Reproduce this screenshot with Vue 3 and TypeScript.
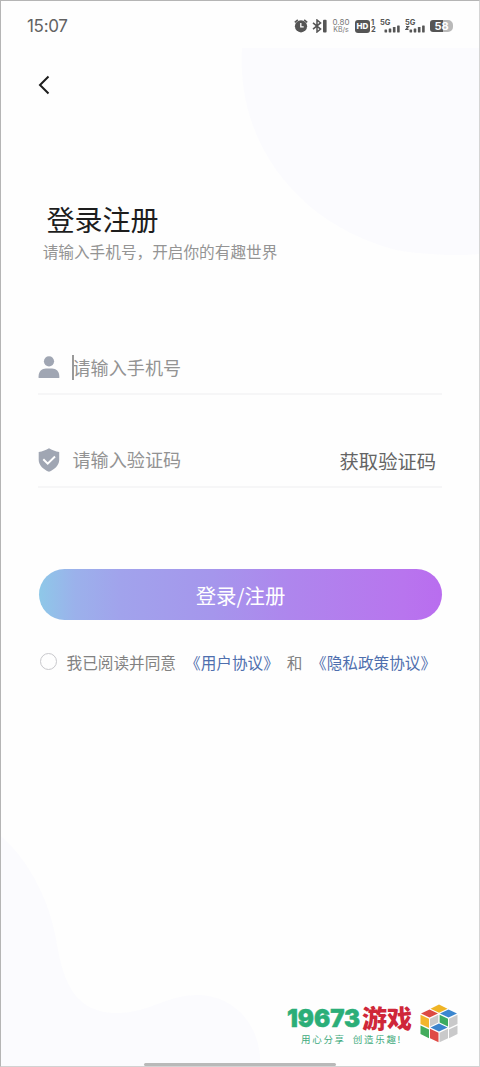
<script setup lang="ts">
import { ref } from 'vue'

interface Face {
  points: string
  color: string
}

const time = '15:07'
const agreed = ref(false)
const bars = [3, 4, 5.5, 7]

const cubeFaces: Face[] = [
  { points: '19,0.5 27.5,4.8 19,8.8 10.5,4.8', color: '#efb425' },
  { points: '9.5,5.5 18,9.6 9.5,13.6 1,9.6', color: '#dc4a43' },
  { points: '28.5,5.5 37,9.6 28.5,13.6 20,9.6', color: '#3b86cf' },
  { points: '0.5,10.8 9,14.8 9,24 0.5,20', color: '#f3b62c' },
  { points: '10,14.8 18.3,10.8 18.3,18.6 10,22.5', color: '#c9c9ca' },
  { points: '19.6,10.8 28,14.8 28,22.5 19.6,18.6', color: '#3cab61' },
  { points: '29,14.8 37.5,10.8 37.5,20 29,24', color: '#c9c9ca' },
  { points: '19,19.6 27.5,23.4 19,27.4 10.5,23.4', color: '#3b83cc' },
  { points: '0.5,21.4 9,25.4 9,34.2 0.5,30', color: '#43ac5d' },
  { points: '10,24.7 18.5,28.7 18.5,38.3 10,34.3', color: '#df4a45' },
  { points: '19.5,28.7 28,24.7 28,34.3 19.5,38.3', color: '#c9c9ca' },
  { points: '29,25.4 37.5,21.4 37.5,30 29,34.2', color: '#c9c9ca' },
]
</script>

<template>
  <div class="screen">
    <svg class="backdrop" viewBox="0 0 480 1067" aria-hidden="true">
      <path d="M242 48H479V254C460 256 425 255 396 250C303 226 236 148 242 48Z" />
      <path d="M1 836C30 862 49 900 56 939C63 984 76 1013 117 1013C151 1013 164 995 199 995C232 996 257 1021 260 1056V1066H1Z" />
    </svg>

    <header class="status">
      <span class="time">{{ time }}</span>
      <div class="indicators">
        <svg class="alarm" viewBox="0 0 14 14">
          <circle cx="7" cy="7.3" r="6.1" fill="#555" />
          <path d="M0.8 3.3L3.8 0.8M13.2 3.3L10.2 0.8" stroke="#555" stroke-width="1.5" />
          <path d="M6.8 4V7.8H9.7" fill="none" stroke="#fff" stroke-width="1.3" />
        </svg>
        <svg class="bluetooth" viewBox="0 0 15 14">
          <path d="M1 3.8L8.6 10.1L5 13V1L8.6 3.9L1 10.2" fill="none" stroke="#555" stroke-width="1.5" />
          <rect x="11" y="0.8" width="3.6" height="12.6" rx="1" fill="#555" />
        </svg>
        <span class="speed"><span>0.80</span><span>KB/s</span></span>
        <span class="hd">HD</span>
        <span class="sims"><span>1</span><span>2</span></span>
        <svg v-for="n in 2" :key="n" class="signal" viewBox="0 0 21 16">
          <text x="0" y="7.2" class="network">5G</text>
          <path v-if="n === 2" d="M1 8.7H3.5L1 11.3H3.6" fill="none" stroke="#555" stroke-width="1.2" />
          <rect
            v-for="(height, index) in bars"
            :key="index"
            :x="4.5 + index * 4.2"
            :y="14.5 - height"
            width="2.6"
            :height="height"
            rx="0.4"
            fill="#555"
          />
        </svg>
        <span class="battery">58</span>
      </div>
    </header>

    <button class="back" aria-label="返回">
      <svg viewBox="0 0 14 20">
        <path d="M11.5 1.5L3 10L11.5 18.5" />
      </svg>
    </button>

    <main>
      <h1>登录注册</h1>
      <p class="subtitle">请输入手机号，开启你的有趣世界</p>

      <div class="field phone">
        <svg class="field-icon" viewBox="0 0 22 24">
          <circle cx="11" cy="6.3" r="5.1" />
          <path d="M0.6 23V21.2C0.6 16.4 3.8 13.4 8 13.4H14C18.2 13.4 21.3 16.4 21.3 21.2V23Z" />
        </svg>
        <span class="placeholder"><i class="caret"></i>请输入手机号</span>
      </div>

      <div class="field code">
        <svg class="field-icon" viewBox="0 0 22 24">
          <path d="M11 0.2C13.8 2 17.5 3.4 21.2 4V12C21.2 17.3 16.2 21.8 11 23.8C5.8 21.8 0.7 17.3 0.7 12V4C4.5 3.4 8.2 2 11 0.2Z" />
          <path class="check" d="M5.3 11.2L9.7 15.6L17 8.5" />
        </svg>
        <span class="placeholder">请输入验证码</span>
        <span class="send">获取验证码</span>
      </div>

      <button class="submit">登录/注册</button>

      <div class="agreement">
        <span class="radio" @click="agreed = !agreed"></span>
        <span>我已阅读并同意</span>
        <a class="terms">《用户协议》</a>
        <span class="and">和</span>
        <a class="privacy">《隐私政策协议》</a>
      </div>
    </main>

    <footer>
      <div class="brand">
        <div class="brand-name"><span class="digits">19673</span><span class="game">游戏</span></div>
        <div class="slogan"><span>用心分享</span><span>创造乐趣!</span></div>
      </div>
      <svg class="cube" viewBox="0 0 38 39">
        <polygon v-for="face in cubeFaces" :key="face.points" :points="face.points" :fill="face.color" />
      </svg>
    </footer>
    <div class="home-bar"></div>
  </div>
</template>

<style>
html,
body {
  margin: 0;
  background: #fefefe;
}
</style>

<style scoped>
.screen {
  position: relative;
  box-sizing: border-box;
  width: 480px;
  height: 1067px;
  overflow: hidden;
  display: flex;
  flex-direction: column;
  border: 1px solid #b5b5b5;
  border-right-color: #d5d5d5;
  border-bottom-color: #d2d2d2;
  background: #fefefe;
  font-family: "Noto Sans CJK SC", sans-serif;
}
.backdrop {
  position: absolute;
  left: -1px;
  top: -1px;
  width: 480px;
  height: 1067px;
  fill: #fbfbfe;
}
.status,
.back,
main,
footer {
  position: relative;
}
.status {
  display: flex;
  justify-content: space-between;
  align-items: center;
  height: 50px;
  padding: 0 26px 0 26px;
  box-sizing: border-box;
}
.time {
  font: 17px/20px Inter, sans-serif;
  letter-spacing: -0.3px;
  color: #626262;
}
.indicators {
  display: flex;
  align-items: center;
  color: #555;
  font-family: Inter, sans-serif;
}
.alarm {
  width: 14px;
  height: 14px;
}
.bluetooth {
  width: 15px;
  height: 14px;
  margin-left: 4px;
}
.speed {
  display: flex;
  flex-direction: column;
  align-items: center;
  width: 18px;
  margin-left: 5px;
  font-size: 8px;
  line-height: 7px;
  color: #777;
}
.speed span:last-child {
  font-size: 7px;
}
.hd {
  width: 15px;
  height: 13px;
  margin-left: 5px;
  border-radius: 3px;
  background: #555;
  color: #fff;
  font-size: 8px;
  font-weight: 800;
  line-height: 13px;
  text-align: center;
}
.sims {
  display: flex;
  flex-direction: column;
  width: 5px;
  margin-left: 1px;
  font-size: 7.5px;
  font-weight: 700;
  line-height: 7px;
}
.signal {
  width: 21px;
  height: 16px;
  margin-left: 4px;
}
.network {
  font: 700 7.5px Inter, sans-serif;
  fill: #555;
}
.battery {
  width: 23px;
  height: 12px;
  margin-left: 4px;
  border-radius: 3px 5px 5px 3px;
  background: linear-gradient(90deg, #555 57%, #b9b9b9 57%);
  color: #fff;
  font-size: 11px;
  font-weight: 700;
  line-height: 12px;
  text-align: center;
}
.back {
  width: 14px;
  height: 20px;
  margin: 24px 0 0 36px;
  padding: 0;
  border: 0;
  background: none;
}
.back svg {
  display: block;
  width: 14px;
  height: 20px;
}
.back path {
  fill: none;
  stroke: #1d1d1d;
  stroke-width: 2;
}
main {
  display: flex;
  flex-direction: column;
  margin: 104px 37px 0;
}
h1 {
  margin: 0 0 0 8.5px;
  color: #1d1d1d;
  font-size: 28px;
  font-weight: 400;
  line-height: 40px;
}
.subtitle {
  margin: 1px 0 0 4.7px;
  color: #949494;
  font-size: 15.65px;
  line-height: 24px;
}
.field {
  display: flex;
  align-items: center;
  box-sizing: border-box;
  height: 54px;
  border-bottom: 2px solid #f6f6f7;
}
.phone {
  margin-top: 77px;
}
.code {
  margin-top: 39px;
}
.field-icon {
  width: 22px;
  height: 24px;
  margin-bottom: 1px;
  fill: #a0a6b3;
}
.check {
  fill: none;
  stroke: #fff;
  stroke-width: 2;
}
.placeholder {
  position: relative;
  margin: 0 0 1px 12.5px;
  color: #939393;
  font-size: 18.1px;
  line-height: 26px;
}
.code .placeholder {
  margin-bottom: 2px;
}
.caret {
  position: absolute;
  left: -1px;
  top: 1px;
  width: 2px;
  height: 25px;
  background: #999;
}
.send {
  margin: 1px 6px 0 auto;
  color: #646464;
  font-size: 19.3px;
  line-height: 26px;
}
.submit {
  width: 403px;
  height: 51px;
  margin: 81px 0 0 1px;
  padding: 0;
  border: 0;
  border-radius: 26px;
  background: linear-gradient(90deg, #8ec8e8 0%, #9bb1eb 9%, #a1a3ec 20%, #a596ec 43%, #ae86ed 62%, #b875ee 90%, #b96def 100%);
  color: #fff;
  font: 20.4px/52px "Noto Sans CJK SC", sans-serif;
}
.agreement {
  display: flex;
  align-items: center;
  height: 24px;
  margin-top: 31px;
  color: #828282;
  font-size: 15.65px;
  line-height: 24px;
  white-space: nowrap;
}
.radio {
  width: 15px;
  height: 15px;
  margin: 0 9.5px 3px 2px;
  border: 1.5px solid #c8c8cc;
  border-radius: 50%;
}
.terms,
.privacy {
  color: #4f6fae;
}
.terms {
  margin-left: 9px;
}
.and {
  margin-left: 8px;
}
.privacy {
  margin-left: 8.5px;
}
footer {
  display: flex;
  align-items: flex-start;
  margin: auto 21px 20px auto;
}
.brand {
  width: 126px;
  margin-right: 7px;
}
.brand-name {
  display: flex;
  align-items: center;
  height: 29px;
  white-space: nowrap;
}
.digits {
  width: 75px;
  color: #2bae78;
  font: 900 24px/29px Inter, sans-serif;
  -webkit-text-stroke: 0.5px #2bae78;
}
.game {
  padding-top: 2px;
  color: #cf2739;
  font: 900 25px/27px Inter, "Noto Sans CJK SC", sans-serif;
}
.slogan {
  display: flex;
  gap: 7px;
  padding-top: 1px;
  margin-left: 14px;
  color: #3faa7d;
  font: 9.5px/12px Inter, "Noto Sans CJK SC", sans-serif;
  letter-spacing: 1.7px;
  white-space: nowrap;
}
.cube {
  width: 38px;
  height: 39px;
}
.home-bar {
  position: absolute;
  left: 143px;
  bottom: 0;
  width: 192px;
  height: 3px;
  border-radius: 2px;
  background: #b9b9b9;
}
</style>
